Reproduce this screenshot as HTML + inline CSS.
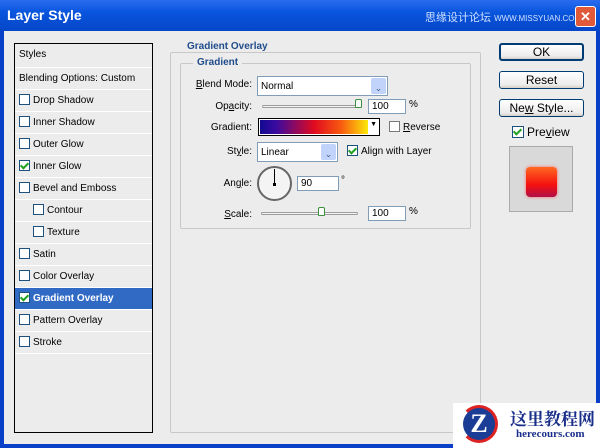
<!DOCTYPE html><html><head><style>
*{margin:0;padding:0;box-sizing:border-box}
body{width:600px;height:448px;overflow:hidden;background:#0a3fc8;font-family:"Liberation Sans",sans-serif;font-size:10px;color:#000;position:relative}
.abs{position:absolute}
#title{left:0;top:0;width:600px;height:31px;background:linear-gradient(#2a6cf0,#0855dd 40%,#0646c8);}
#body{left:4px;top:31px;width:592px;height:413px;background:#ececec}
.list{left:14px;top:43px;width:139px;height:390px;border:1px solid #000;background:#ececec}
.row{position:absolute;left:0;width:137px;height:22px;border-bottom:1px solid #fff;line-height:21px;padding-left:4px}
.cb{display:inline-block;width:11px;height:11px;border:1px solid #1c5180;background:#fff;vertical-align:-2px;margin-right:3px;position:relative}
.ck:after{content:"";position:absolute;left:2px;top:0px;width:3px;height:6px;border:solid #21a121;border-width:0 2px 2px 0;transform:rotate(45deg)}
.fs{border:1px solid #c8c8c8;border-radius:2px}
.lg{position:absolute;background:#ececec;color:#1f4c8a;font-weight:bold;padding:0 4px}
.lab{position:absolute;text-align:right;width:80px}
.inp{position:absolute;background:#fff;border:1px solid #7f9db9;padding-left:3px}
.btn{position:absolute;left:499px;width:85px;height:18px;border:1px solid #003c74;border-radius:3px;background:linear-gradient(#fff,#ececec 80%,#d6d0c5);text-align:center;font-size:12px;line-height:16px}
.dd{position:absolute;right:1px;top:1px;width:15px;bottom:1px;background:#c1d3fb;border-radius:2px;color:#4d6185;font-size:9px;text-align:center}
.slider{position:absolute;height:3px;border:1px solid #9d9d9d;border-radius:2px;background:#f4f4f4}
.thumb{position:absolute;width:7px;height:9px;background:#fff;border:1px solid #3a8f3a;border-radius:2px 2px 1px 1px}
</style></head><body>
<div id="title" class="abs"><div class="abs" style="left:7px;top:7px;color:#fff;font-weight:bold;font-size:14px">Layer Style</div>
<div class="abs" style="left:425px;top:9px;color:#cfe0ff;font-size:11px;font-family:'Liberation Sans','Noto Sans CJK SC',sans-serif">思缘设计论坛 <span style="font-size:8px">WWW.MISSYUAN.COM</span></div>
<div class="abs" style="left:575px;top:6px;width:21px;height:21px;background:#e05a3a;border:1px solid #fff;border-radius:3px;color:#fff;font-weight:bold;text-align:center;line-height:19px;font-size:13px">✕</div></div>
<div id="body" class="abs"></div>
<div class="abs list">
<div class="row" style="top:0;height:24px;line-height:22px">Styles</div>
<div class="row" style="top:24px">Blending Options: Custom</div>
<div class="row" style="top:46px"><span class="cb"></span>Drop Shadow</div>
<div class="row" style="top:68px"><span class="cb"></span>Inner Shadow</div>
<div class="row" style="top:90px"><span class="cb"></span>Outer Glow</div>
<div class="row" style="top:112px"><span class="cb ck"></span>Inner Glow</div>
<div class="row" style="top:134px"><span class="cb"></span>Bevel and Emboss</div>
<div class="row" style="top:156px;padding-left:18px"><span class="cb"></span>Contour</div>
<div class="row" style="top:178px;padding-left:18px"><span class="cb"></span>Texture</div>
<div class="row" style="top:200px"><span class="cb"></span>Satin</div>
<div class="row" style="top:222px"><span class="cb"></span>Color Overlay</div>
<div class="row" style="top:244px;background:#316ac5;color:#fff;font-weight:bold"><span class="cb ck"></span>Gradient Overlay</div>
<div class="row" style="top:266px"><span class="cb"></span>Pattern Overlay</div>
<div class="row" style="top:288px"><span class="cb"></span>Stroke</div>
</div>
<div class="abs fs" style="left:170px;top:52px;width:311px;height:381px"></div>
<div class="lg" style="left:183px;top:41px">Gradient Overlay</div>
<div class="abs fs" style="left:180px;top:63px;width:291px;height:166px"></div>
<div class="lg" style="left:193px;top:57px">Gradient</div>
<div class="lab" style="left:172px;top:79px"><u>B</u>lend Mode:</div>
<div class="inp" style="left:257px;top:76px;width:131px;height:20px;line-height:20px;font-size:10px">Normal<div class="dd">⌄</div></div>
<div class="lab" style="left:172px;top:101px">Op<u>a</u>city:</div>
<div class="slider" style="left:262px;top:105px;width:100px"></div><div class="thumb" style="left:355px;top:99px"></div>
<div class="inp" style="left:368px;top:99px;width:38px;height:15px;line-height:14px">100</div><div class="abs" style="left:409px;top:99px">%</div>
<div class="lab" style="left:172px;top:122px">Gradient:</div>
<div class="abs" style="left:258px;top:118px;width:122px;height:18px;border:1px solid #000;background:#fff"><div class="abs" style="left:1px;top:1px;width:108px;height:14px;background:linear-gradient(90deg,#120a90,#3a0aa0 15%,#e00a20 50%,#f85a10 75%,#fbe80a)"></div><div class="abs" style="right:2px;top:2px;font-size:7px">▼</div></div>
<div class="abs" style="left:389px;top:121px"><span class="cb" style="border-color:#7a7a7a"></span><u>R</u>everse</div>
<div class="lab" style="left:172px;top:146px">St<u>y</u>le:</div>
<div class="inp" style="left:257px;top:142px;width:81px;height:20px;line-height:20px">Linear<div class="dd">⌄</div></div>
<div class="abs" style="left:347px;top:145px"><span class="cb ck"></span>Align with Layer</div>
<div class="lab" style="left:172px;top:178px">An<u>g</u>le:</div>
<div class="abs" style="left:257px;top:166px;width:35px;height:35px;border:2px solid #666;border-radius:50%;background:#f4f4f4"><div class="abs" style="left:15px;top:1px;width:1px;height:16px;background:#000"></div><div class="abs" style="left:14px;top:15px;width:3px;height:3px;background:#000"></div></div>
<div class="inp" style="left:297px;top:176px;width:42px;height:15px;line-height:14px">90</div><div class="abs" style="left:341px;top:175px">°</div>
<div class="lab" style="left:172px;top:209px"><u>S</u>cale:</div>
<div class="slider" style="left:261px;top:212px;width:97px"></div><div class="thumb" style="left:318px;top:207px"></div>
<div class="inp" style="left:368px;top:206px;width:38px;height:15px;line-height:14px">100</div><div class="abs" style="left:409px;top:206px">%</div>
<div class="btn" style="top:43px;border-width:2px;line-height:14px">OK</div>
<div class="btn" style="top:71px">Reset</div>
<div class="btn" style="top:99px">Ne<u>w</u> Style...</div>
<div class="abs" style="left:512px;top:125px;font-size:12px"><span class="cb ck" style="width:12px;height:12px"></span>Pre<u>v</u>iew</div>
<div class="abs" style="left:509px;top:146px;width:64px;height:66px;background:#d9d9d9;border:1px solid #aaa"><div class="abs" style="left:16px;top:20px;width:31px;height:30px;border-radius:4px;background:linear-gradient(#ff6a20,#f51010 60%,#b0104a);box-shadow:0 0 3px #f66"></div></div>
<div class="abs" style="left:453px;top:403px;width:147px;height:45px;background:#fff"></div>
<div class="abs" style="left:460px;top:405px;width:38px;height:38px;border-radius:50%;background:#1c3d95;border:3px solid #d22;border-left-color:#fff;color:#fff;font-weight:bold;font-size:26px;text-align:center;line-height:32px;font-family:'Liberation Serif',serif">Z</div>
<div class="abs" style="left:510px;top:405px;color:#1a2f8a;font-weight:bold;font-size:17px;font-family:'Liberation Serif','Noto Serif CJK SC',serif">这里教程网</div>
<div class="abs" style="left:516px;top:428px;color:#1a2f8a;font-weight:bold;font-size:11px;font-family:'Liberation Serif',serif">herecours.com</div>
</body></html>
